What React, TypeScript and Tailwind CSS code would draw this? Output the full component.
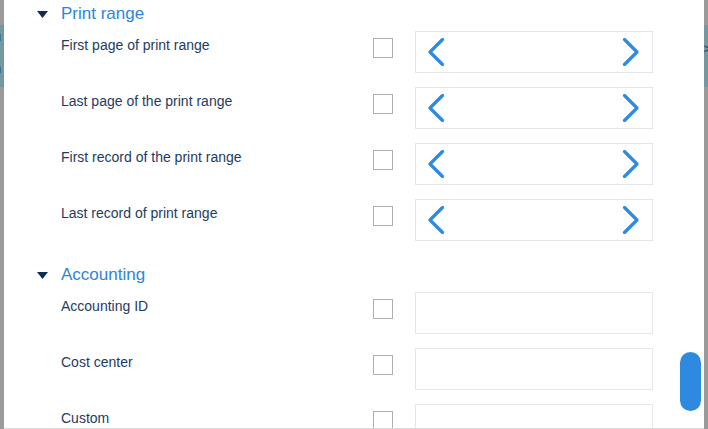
import React from "react";

const font = { fontFamily: '"Liberation Sans", Arial, sans-serif' };

function Chevron({ dir }: { dir: "left" | "right" }) {
  return (
    <svg width="18" height="28" viewBox="0 0 18 28" className="block">
      {dir === "left" ? (
        <polyline points="15.5,1.5 3,14 15.5,26.5" fill="none" stroke="#2d8ae3" strokeWidth="3.2" strokeLinecap="round" strokeLinejoin="round" />
      ) : (
        <polyline points="2.5,1.5 15,14 2.5,26.5" fill="none" stroke="#2d8ae3" strokeWidth="3.2" strokeLinecap="round" strokeLinejoin="round" />
      )}
    </svg>
  );
}

function Row({ label, nav }: { label: string; nav?: boolean }) {
  return (
    <div className="flex items-start h-[56px]">
      <div className="w-[369px] pl-[57px] pt-[4px] text-[14px] leading-[20px] text-[#1f3b5f]">{label}</div>
      <div className="mt-[7px] w-[20px] h-[20px] border border-[#adb0b0] bg-white" />
      <div className="ml-[22px] w-[238px] h-[42px] border border-[#e6e6e6] bg-white flex items-center justify-between pl-[11px] pr-[12px]">
        {nav ? (
          <>
            <Chevron dir="left" />
            <Chevron dir="right" />
          </>
        ) : null}
      </div>
    </div>
  );
}

function Header({ title }: { title: string }) {
  return (
    <div className="flex items-center h-[28px] pl-[33px]">
      <svg width="11" height="7" viewBox="0 0 11 7" className="block mt-[1px]">
        <polygon points="0,0 11,0 5.5,7" fill="#0f2d52" />
      </svg>
      <span className="ml-[13px] text-[17px] leading-[28px] text-[#2b86d9]">{title}</span>
    </div>
  );
}

export default function App() {
  return (
    <div className="relative w-[708px] h-[429px] overflow-hidden bg-[#9a9a9a]" style={font}>
      {/* backdrop band */}
      <div className="absolute left-0 right-0 top-[25px] h-[62px] bg-[#75989e]">
        <span className="absolute left-[-6px] top-[2px] text-[13px] text-[#1f3b5f]">u</span>
        <span className="absolute left-[-6px] top-[34px] text-[13px] text-[#1f3b5f]">n</span>
        <span className="absolute right-[-3px] top-[14px] text-[13px] text-[#1f3b5f]">&gt;</span>
      </div>
      {/* dialog panel */}
      <div className="absolute left-[4px] top-0 w-[700px] h-[429px] bg-white border-b border-[#dcdcdc] overflow-hidden">
        <div className="flex flex-col">
          <div>
            <Header title="Print range" />
            <div className="mt-[3px]">
              <Row label="First page of print range" nav />
              <Row label="Last page of the print range" nav />
              <Row label="First record of the print range" nav />
              <Row label="Last record of print range" nav />
            </div>
          </div>
          <div className="mt-[6px]">
            <Header title="Accounting" />
            <div className="mt-[3px]">
              <Row label="Accounting ID" />
              <Row label="Cost center" />
              <Row label="Custom" />
            </div>
          </div>
        </div>
        <div className="absolute left-[676px] top-[352px] w-[21px] h-[59px] rounded-full bg-[#2d8ae0]" />
      </div>
    </div>
  );
}
